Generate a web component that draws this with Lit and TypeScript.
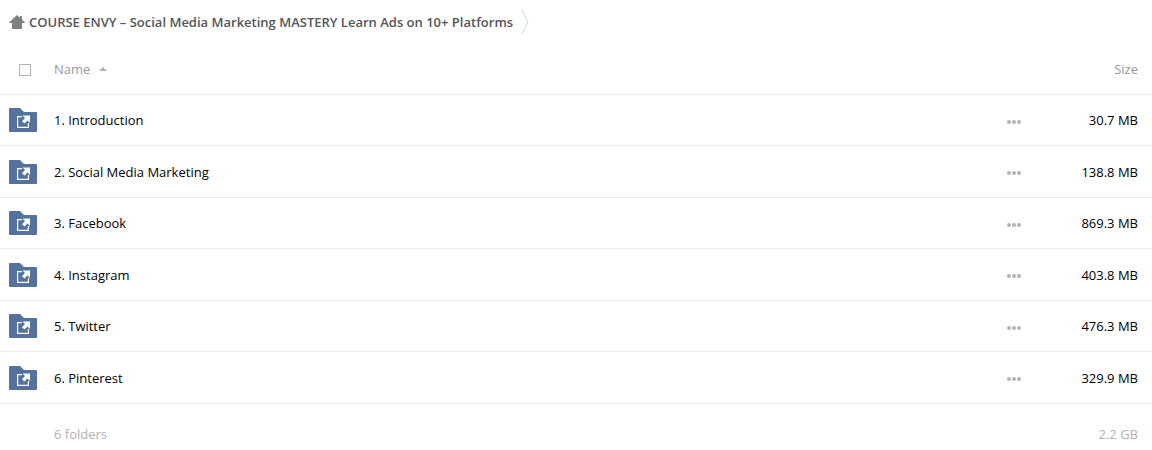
import { LitElement, html, css } from "lit";
import { customElement, state } from "lit/decorators.js";

interface Folder {
  name: string;
  size: string;
}

@customElement("app-root")
export class AppRoot extends LitElement {
  static styles = css`
    :host {
      display: block;
      background: #fff;
      color: #000;
      font: 13px/20px "Open Sans", "Noto Sans", sans-serif;
    }
    .crumbs {
      display: flex;
      align-items: center;
      height: 44px;
      padding-left: 9px;
    }
    .crumb {
      display: flex;
      align-items: center;
      gap: 4px;
      color: #555;
      font-weight: 600;
      text-decoration: none;
    }
    .chevron {
      margin-left: 8px;
    }
    svg {
      display: block;
    }
    .files {
      width: 100%;
      border-collapse: separate;
      border-spacing: 0;
      table-layout: fixed;
    }
    th,
    td {
      box-sizing: border-box;
      height: 51px;
      padding: 0;
      border-bottom: 1px solid #ebebeb;
      text-align: left;
      font-weight: 400;
      vertical-align: middle;
    }
    .row:nth-child(even) td {
      height: 52px;
    }
    .lead {
      width: 54px;
      padding-left: 9px;
    }
    .menu {
      width: 34px;
    }
    .size {
      width: 111px;
      padding-right: 14px;
      text-align: right;
    }
    .head {
      color: #999;
    }
    .check {
      display: block;
      appearance: none;
      box-sizing: border-box;
      width: 12px;
      height: 12px;
      margin: 2px 0 0 10px;
      border: 1px solid #b2b2b2;
      background: #fff;
    }
    .check:checked {
      background: #b2b2b2;
    }
    button {
      display: flex;
      align-items: center;
      padding: 0;
      border: 0;
      background: none;
      color: inherit;
      font: inherit;
      cursor: pointer;
    }
    .sort {
      gap: 9px;
    }
    .more {
      height: 20px;
      padding: 3px 7px 0 0;
    }
    .name {
      color: inherit;
      text-decoration: none;
    }
    .foot td {
      height: 50px;
      padding-top: 10px;
      border: 0;
      color: #b2b2b2;
    }
  `;

  @state() private descending = false;

  private folders: Folder[] = [
    { name: "1. Introduction", size: "30.7 MB" },
    { name: "2. Social Media Marketing", size: "138.8 MB" },
    { name: "3. Facebook", size: "869.3 MB" },
    { name: "4. Instagram", size: "403.8 MB" },
    { name: "5. Twitter", size: "476.3 MB" },
    { name: "6. Pinterest", size: "329.9 MB" },
  ];

  private toggleSort() {
    this.descending = !this.descending;
  }

  private renderRow(folder: Folder) {
    return html`
      <tr class="row">
        <td class="lead">
          <svg width="28" height="24" viewBox="0 0 28 24" aria-hidden="true">
            <path fill="#54729c" d="M0 1Q0 0 1 0H11L15 4H27Q28 4 28 5V23Q28 24 27 24H1Q0 24 0 23Z" />
            <path fill="none" stroke="#fff" stroke-width="1.2" d="M13 8.6H8.6V19.4H19.4V15" />
            <path fill="#fff" d="M13.5 7.5H21V15L18.6 12.6L15.4 15.6L13 13.2L16 10Z" />
          </svg>
        </td>
        <td><a class="name" href="#">${folder.name}</a></td>
        <td class="menu">
          <button class="more" aria-label="Actions for ${folder.name}">
            <svg width="14" height="4" viewBox="0 0 14 4" fill="#b2b2b2" aria-hidden="true">
              <circle cx="2" cy="2" r="2" />
              <circle cx="7" cy="2" r="2" />
              <circle cx="12" cy="2" r="2" />
            </svg>
          </button>
        </td>
        <td class="size">${folder.size}</td>
      </tr>
    `;
  }

  render() {
    const rows = this.descending ? [...this.folders].reverse() : this.folders;
    return html`
      <nav class="crumbs" aria-label="Breadcrumb">
        <a class="crumb" href="#">
          <svg width="16" height="14" viewBox="0 0 16 14" fill="#808080" aria-hidden="true">
            <path d="M8 0L11 2.7V1H13V4.6L16 7.4V8H13V14H3V8H0V7.4Z" />
          </svg>
          <span>COURSE ENVY – Social Media Marketing MASTERY Learn Ads on 10+ Platforms</span>
        </a>
        <svg class="chevron" width="8" height="24" viewBox="0 0 8 24" aria-hidden="true">
          <path d="M1 0L7 12L1 24" fill="none" stroke="#d5d5d5" />
        </svg>
      </nav>
      <table class="files">
        <thead>
          <tr class="head">
            <th class="lead"><input class="check" type="checkbox" aria-label="Select all" /></th>
            <th>
              <button class="sort" @click=${this.toggleSort}>
                <span>Name</span>
                <svg width="8" height="4" viewBox="0 0 8 4" fill="#b2b2b2" aria-hidden="true">
                  <path d=${this.descending ? "M0 0H8L4 4Z" : "M4 0L8 4H0Z"} />
                </svg>
              </button>
            </th>
            <th class="menu"></th>
            <th class="size">Size</th>
          </tr>
        </thead>
        <tbody>
          ${rows.map((folder) => this.renderRow(folder))}
        </tbody>
        <tfoot>
          <tr class="foot">
            <td class="lead"></td>
            <td>6 folders</td>
            <td class="menu"></td>
            <td class="size">2.2 GB</td>
          </tr>
        </tfoot>
      </table>
    `;
  }
}
